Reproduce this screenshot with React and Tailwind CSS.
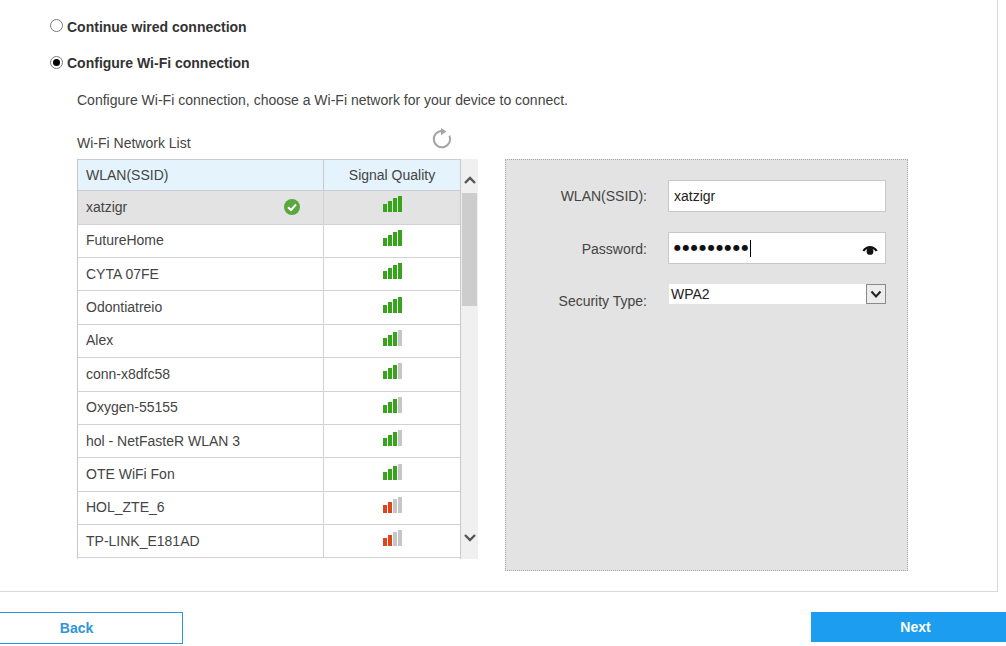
const rows = [
  ["xatzigr", 4, "g"],
  ["FutureHome", 4, "g"],
  ["CYTA 07FE", 4, "g"],
  ["Odontiatreio", 4, "g"],
  ["Alex", 3, "g"],
  ["conn-x8dfc58", 3, "g"],
  ["Oxygen-55155", 3, "g"],
  ["hol - NetFasteR WLAN 3", 3, "g"],
  ["OTE WiFi Fon", 3, "g"],
  ["HOL_ZTE_6", 2, "r"],
  ["TP-LINK_E181AD", 2, "r"],
];

const heights = ["h-[8px]", "h-[11px]", "h-[14px]", "h-[16px]"];

function Bars({ level, tone }) {
  return (
    <div className="flex items-end gap-[1px] h-[16px] relative top-[-3px]">
      {heights.map((h, i) => (
        <div
          key={i}
          className={`w-[4px] ${h} ${i < level ? (tone === "g" ? "bg-[#37a51c]" : "bg-[#e2441a]") : "bg-[#c6c6c6]"}`}
        />
      ))}
    </div>
  );
}

function Radio({ on }) {
  return (
    <div className="w-[13px] h-[13px] rounded-full border border-[#7a7a7a] bg-white flex items-center justify-center shrink-0">
      {on && <div className="w-[7px] h-[7px] rounded-full bg-black" />}
    </div>
  );
}

function Chevron({ up }) {
  return (
    <svg width="14" height="10" viewBox="0 0 14 10" fill="none">
      <path d={up ? "M2 8 L7 3 L12 8" : "M2 2 L7 7 L12 2"} stroke="#555" strokeWidth="2.4" />
    </svg>
  );
}

export default function App() {
  return (
    <div className="w-[1006px] h-[646px] overflow-hidden bg-white text-[14px] text-[#444] font-['Liberation_Sans',Arial,sans-serif] relative">
      <div className="w-[998px] h-[592px] border-r border-b border-[#d9d9d9] pl-[50px] pt-[18px]">
        <div className="flex items-center gap-[4px] h-[18px] font-bold text-[#333]">
          <div className="relative top-[-2px]"><Radio /></div>
          <span>Continue wired connection</span>
        </div>
        <div className="flex items-center gap-[4px] h-[18px] mt-[18px] font-bold text-[#333]">
          <div className="relative top-[-1px]"><Radio on /></div>
          <span>Configure Wi-Fi connection</span>
        </div>
        <div className="ml-[27px] mt-[19px] leading-[18px]">
          Configure Wi-Fi connection, choose a Wi-Fi network for your device to connect.
        </div>

        <div className="ml-[27px] mt-[11px] flex items-start">
          <div className="w-[401px] shrink-0">
            <div className="h-[39px] flex items-center justify-between">
              <span className="relative top-[4px]">Wi-Fi Network List</span>
              <svg width="22" height="24" viewBox="0 0 22 24" fill="none" className="mr-[25px]">
                <path d="M18.4 7.6 A8.2 8.2 0 1 1 10.8 2.9" stroke="#a3a3a3" strokeWidth="2" />
                <path d="M10 0 L15.4 3.6 L10 7.2 Z" fill="#a3a3a3" />
              </svg>
            </div>
            <div className="flex h-[400px]">
              <div className="w-[384px] h-[400px] overflow-hidden border-l border-r border-[#c8c8c8]">
                <div className="flex h-[32.2px] bg-[#e5f3fd] border-t border-b border-[#c8ccd0]">
                  <div className="w-[246px] border-r border-[#c8c8c8] pl-[8px] flex items-center">WLAN(SSID)</div>
                  <div className="flex-1 flex items-center justify-center">Signal Quality</div>
                </div>
                {rows.map((r, i) => (
                  <div key={r[0]} className={`flex h-[33.4px] border-b border-[#d2d2d2] ${i === 0 ? "bg-[#e3e3e3]" : "bg-white"}`}>
                    <div className="w-[246px] border-r border-[#d2d2d2] pl-[8px] pr-[23px] flex items-center justify-between">
                      <span>{r[0]}</span>
                      {i === 0 && (
                        <svg width="16" height="16" viewBox="0 0 16 16">
                          <circle cx="8" cy="8" r="8" fill="#5aa83c" />
                          <path d="M4 8.2 L7 11 L12 5.5" stroke="#fff" strokeWidth="2" fill="none" />
                        </svg>
                      )}
                    </div>
                    <div className="flex-1 flex items-center justify-center">
                      <Bars level={r[1]} tone={r[2]} />
                    </div>
                  </div>
                ))}
              </div>
              <div className="w-[17px] h-[400px] bg-[#f0f0f0] flex flex-col items-center">
                <div className="h-[34px] w-full flex items-center justify-center shrink-0 relative top-[4px]"><Chevron up /></div>
                <div className="w-[15px] h-[113px] bg-[#cdcdcd] shrink-0" />
                <div className="flex-1" />
                <div className="h-[34px] w-full flex items-center justify-center shrink-0 relative top-[-4px]"><Chevron /></div>
              </div>
            </div>
          </div>

          <div className="ml-[27px] mt-[39px] w-[403px] h-[412px] bg-[#e3e3e3] border border-dotted border-[#a8a8a8] flex flex-col pt-[20px]">
            <div className="flex items-center h-[32px]">
              <div className="w-[141px] text-right">WLAN(SSID):</div>
              <div className="ml-[21px] w-[218px] h-[32px] bg-white border border-[#c8c8c8] flex items-center pl-[5px] text-[#222]">xatzigr</div>
            </div>
            <div className="flex items-center h-[32px] mt-[20px]">
              <div className="w-[141px] text-right relative top-[1px]">Password:</div>
              <div className="ml-[21px] w-[218px] h-[32px] bg-white border border-[#c8c8c8] flex items-center pl-[5px] pr-[7px] justify-between text-[#111]">
                <div className="flex items-center">
                  <span className="tracking-[1.45px] text-[8px] font-['DejaVu_Sans',sans-serif]">●●●●●●●●●</span>
                  <span className="w-[1px] h-[17px] bg-black" />
                </div>
                <svg width="16" height="12" viewBox="0 0 16 12" className="relative top-[2px]">
                  <path d="M0.4 6.6 C4 0.6 12 0.6 15.6 6.6 L13.6 7.4 C10.8 3.6 5.2 3.6 2.4 7.4 Z" fill="#111" />
                  <circle cx="8" cy="7.4" r="3.4" fill="#111" />
                </svg>
              </div>
            </div>
            <div className="flex items-start h-[32px] mt-[20px]">
              <div className="w-[141px] text-right relative top-[7px]">Security Type:</div>
              <div className="ml-[22px] w-[217px] h-[20px] bg-white flex items-center justify-between pl-[2px] text-[#222]">
                <span>WPA2</span>
                <div className="w-[20px] h-[20px] bg-[#ececec] border border-[#8a8a8a] flex items-center justify-center">
                  <svg width="12" height="9" viewBox="0 0 12 9" fill="none">
                    <path d="M1.5 1.5 L6 6.5 L10.5 1.5" stroke="#222" strokeWidth="2" />
                  </svg>
                </div>
              </div>
            </div>
          </div>
        </div>
      </div>

      <div className="flex justify-between items-start mt-[20px]">
        <div className="w-[183px] h-[32px] border-t border-r border-b border-[#2f95dc] flex items-center justify-center text-[#2f95dc] font-bold pr-[29px]">Back</div>
        <div className="w-[195px] h-[30px] bg-[#1c9df0] flex items-center justify-center text-white font-bold pl-[14px]">Next</div>
      </div>
    </div>
  );
}
